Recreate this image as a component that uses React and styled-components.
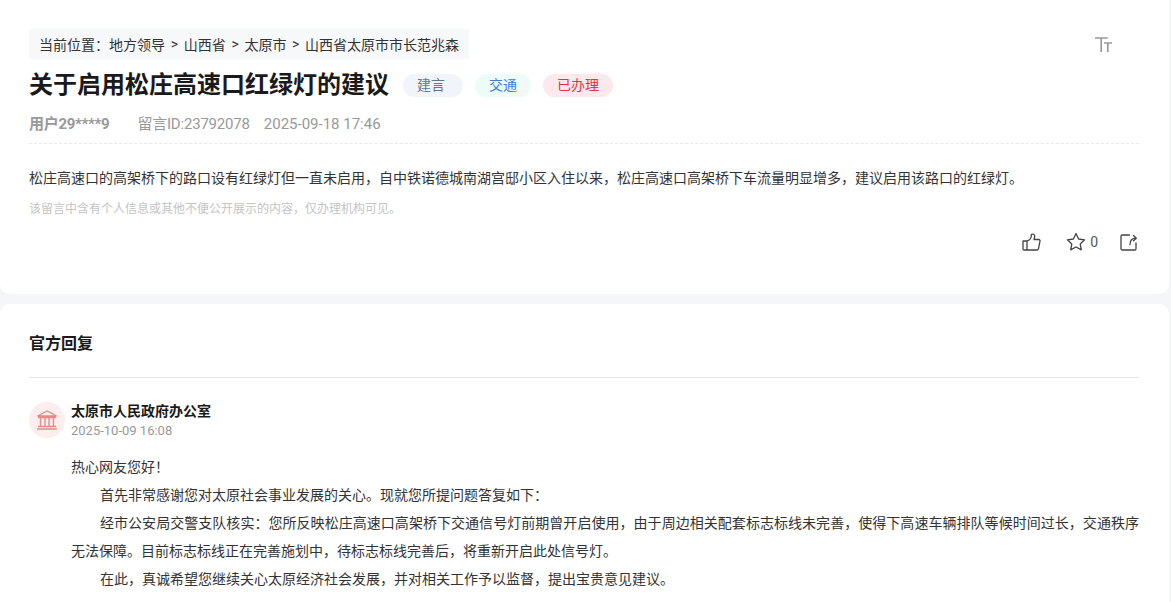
import React from 'react';
import styled, { createGlobalStyle } from 'styled-components';

const GlobalStyle = createGlobalStyle`
  html, body {
    margin: 0;
    padding: 0;
    height: 602px;
    overflow: hidden;
    background: #f5f6f8;
    font-family: Roboto, "Noto Sans CJK SC", sans-serif;
  }
`;

const Page = styled.div`
  width: 1169px;
`;

const TopCard = styled.section`
  box-sizing: border-box;
  height: 294px;
  padding: 29px 30px 0 29px;
  background: #fff;
  border-radius: 0 0 10px 10px;
`;

const CrumbRow = styled.div`
  display: flex;
  justify-content: space-between;
  align-items: flex-start;
`;

const Crumbs = styled.div`
  height: 30px;
  padding: 0 10px;
  background: #f7f8fa;
  border-radius: 3px;
  display: flex;
  align-items: center;
  gap: 5.7px;
  font-size: 14px;
  color: #333;
  white-space: pre;
`;

const FontToggle = styled.svg`
  width: 20px;
  height: 18px;
  margin: 7px 25px 0 0;
  color: #999;
`;

const TitleRow = styled.div`
  display: flex;
  align-items: center;
  height: 30px;
  margin-top: 11px;
`;

const Title = styled.h1`
  margin: 0 14px 0 0;
  font-size: 24px;
  line-height: 30px;
  font-weight: 700;
  color: #1a1a1a;
`;

const tagColors = {
  gray: ['#f1f4f9', '#5f7797'],
  cyan: ['#edfbf9', '#3b7fd9'],
  red: ['#fbe9ec', '#e8304a'],
};

const Tag = styled.span`
  height: 23px;
  line-height: 23px;
  padding: 0 ${(p) => p.$right || 14}px 0 14px;
  margin-right: 12px;
  border-radius: 12px;
  font-size: 14px;
  background: ${(p) => tagColors[p.$tone][0]};
  color: ${(p) => tagColors[p.$tone][1]};
`;

const Meta = styled.div`
  display: flex;
  height: 20px;
  line-height: 20px;
  margin-top: 14px;
  font-size: 15px;
  color: #999;
`;

const Author = styled.span`
  font-weight: 700;
  margin-right: 28px;
  letter-spacing: -0.3px;
`;

const MessageId = styled.span`
  letter-spacing: -0.2px;
`;

const MetaDate = styled.span`
  margin-left: 14px;
`;

const Content = styled.div`
  margin-top: 9px;
  padding-top: 24px;
  border-top: 1px dashed #e8e8e8;
  font-size: 14px;
  line-height: 20px;
  color: #333;
`;

const Notice = styled.div`
  margin-top: 12px;
  font-size: 12px;
  line-height: 18px;
  color: #c4c4c4;
`;

const Actions = styled.div`
  display: flex;
  justify-content: flex-end;
  align-items: center;
  margin-top: 13px;
  height: 22px;
  color: #444;
`;

const ActionIcon = styled.svg`
  width: 20px;
  height: 20px;
  margin-left: ${(p) => p.$gap || 0}px;
`;

const Count = styled.span`
  margin-left: 4px;
  font-size: 14px;
  color: #555;
`;

const ReplyCard = styled.section`
  box-sizing: border-box;
  height: 298px;
  margin-top: 10px;
  padding: 0 30px 0 29px;
  background: #fff;
  border-radius: 10px 10px 0 0;
`;

const ReplyHead = styled.h2`
  margin: 0;
  height: 73px;
  line-height: 79px;
  border-bottom: 1px solid #e6e6e6;
  font-size: 16px;
  font-weight: 700;
  color: #1a1a1a;
`;

const Org = styled.div`
  display: flex;
  gap: 6px;
  margin-top: 24px;
`;

const Avatar = styled.div`
  width: 36px;
  height: 36px;
  border-radius: 50%;
  background: #fdeeee;
  display: flex;
  align-items: center;
  justify-content: center;
  color: #e78a88;
`;

const OrgName = styled.div`
  font-size: 14px;
  font-weight: 700;
  line-height: 18px;
  color: #1a1a1a;
`;

const OrgDate = styled.div`
  margin-top: 3px;
  font-size: 13px;
  line-height: 16px;
  color: #999;
`;

const Body = styled.div`
  margin: 14px 0 0 42px;
  font-size: 14px;
  line-height: 28px;
  color: #333;
`;

const Para = styled.p`
  margin: 0;
  text-align: justify;
  text-indent: ${(p) => (p.$indent ? '29px' : 0)};
`;

export default function App() {
  return (
    <Page>
      <GlobalStyle />
      <TopCard>
        <CrumbRow>
          <Crumbs>
            <span>当前位置：地方领导</span>
            <span>&gt;</span>
            <span>山西省</span>
            <span>&gt;</span>
            <span>太原市</span>
            <span>&gt;</span>
            <span>山西省太原市市长范兆森</span>
          </Crumbs>
          <FontToggle viewBox="0 0 20 18" fill="none" stroke="currentColor" strokeWidth="1.7">
            <path d="M1 2h12.7M7.2 2v14M10 7h8M13.8 7v9" />
          </FontToggle>
        </CrumbRow>
        <TitleRow>
          <Title>关于启用松庄高速口红绿灯的建议</Title>
          <Tag $tone="gray" $right={18}>建言</Tag>
          <Tag $tone="cyan">交通</Tag>
          <Tag $tone="red">已办理</Tag>
        </TitleRow>
        <Meta>
          <Author>用户29****9</Author>
          <MessageId>留言ID:23792078</MessageId>
          <MetaDate>2025-09-18 17:46</MetaDate>
        </Meta>
        <Content>
          松庄高速口的高架桥下的路口设有红绿灯但一直未启用，自中铁诺德城南湖宫邸小区入住以来，松庄高速口高架桥下车流量明显增多，建议启用该路口的红绿灯。
          <Notice>该留言中含有个人信息或其他不便公开展示的内容，仅办理机构可见。</Notice>
        </Content>
        <Actions>
          <ActionIcon viewBox="0 0 20 20" fill="none" stroke="currentColor" strokeWidth="1.3" strokeLinejoin="round">
            <path d="M2 9h4v9H3a1 1 0 0 1-1-1z" />
            <path d="M6 9c2.500-.8 4-2.500 4.200-4.500V3.200C10.200 1.800 13.500 1.700 13.700 3.800c.1 1.300-.2 2.500-.7 3.700h4.600c1 0 1.600.8 1.400 1.700l-1.500 7.400c-.2.900-.9 1.400-1.700 1.400H6" />
          </ActionIcon>
          <ActionIcon $gap={25} viewBox="0 0 20 20" fill="none" stroke="currentColor" strokeWidth="1.3" strokeLinejoin="round">
            <path d="M10 1.500 12.600 7l6 .8-4.400 4.100 1.100 6L10 15l-5.300 2.900 1.100-6L1.400 7.800l6-.8z" />
          </ActionIcon>
          <Count>0</Count>
          <ActionIcon $gap={21} viewBox="0 0 20 20" fill="none" stroke="currentColor" strokeWidth="1.3" strokeLinejoin="round" strokeLinecap="round">
            <path d="M10.500 3H3.200A1.200 1.200 0 0 0 2 4.200v12.600A1.200 1.200 0 0 0 3.200 18h12.600a1.200 1.200 0 0 0 1.200-1.200V11" />
            <path d="M11 12.500c0-3.800 2-6.300 6-6.300M14.500 3.500 17.300 6.200 14.500 8.800" />
          </ActionIcon>
        </Actions>
      </TopCard>
      <ReplyCard>
        <ReplyHead>官方回复</ReplyHead>
        <Org>
          <Avatar>
            <svg width="22" height="20" viewBox="0 0 22 20" fill="none" stroke="currentColor" strokeWidth="1.4">
              <path d="M11 1 1.500 6h19zM2 7.500h18M4.500 8v8M9 8v8M13 8v8M17.500 8v8M2 16.500h18M1 19h20" />
            </svg>
          </Avatar>
          <div>
            <OrgName>太原市人民政府办公室</OrgName>
            <OrgDate>2025-10-09 16:08</OrgDate>
          </div>
        </Org>
        <Body>
          <Para>热心网友您好！</Para>
          <Para $indent>首先非常感谢您对太原社会事业发展的关心。现就您所提问题答复如下：</Para>
          <Para $indent>经市公安局交警支队核实：您所反映松庄高速口高架桥下交通信号灯前期曾开启使用，由于周边相关配套标志标线未完善，使得下高速车辆排队等候时间过长，交通秩序无法保障。目前标志标线正在完善施划中，待标志标线完善后，将重新开启此处信号灯。</Para>
          <Para $indent>在此，真诚希望您继续关心太原经济社会发展，并对相关工作予以监督，提出宝贵意见建议。</Para>
        </Body>
      </ReplyCard>
    </Page>
  );
}
